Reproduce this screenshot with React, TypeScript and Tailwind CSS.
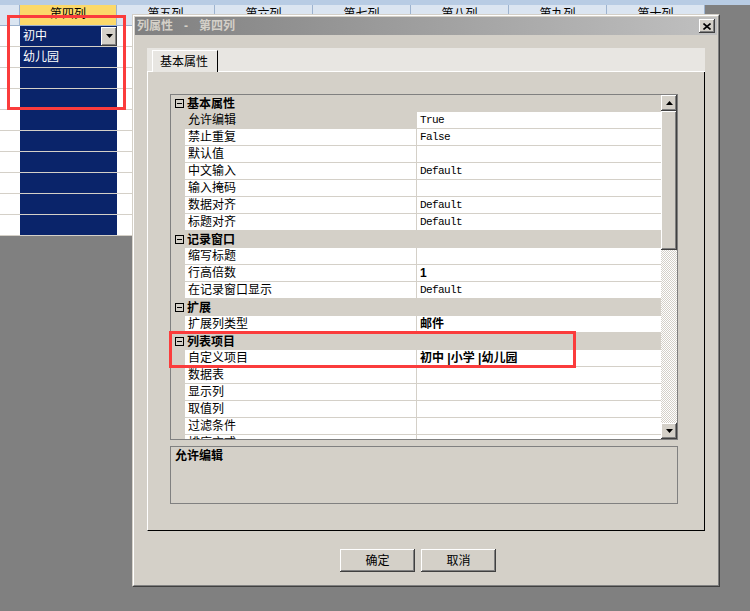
import React from 'react';

type Prop = { cat?: boolean; name: string; value?: string; bold?: boolean; sel?: boolean };

const props: Prop[] = [
  { cat: true, name: '基本属性' },
  { name: '允许编辑', value: 'True', sel: true },
  { name: '禁止重复', value: 'False' },
  { name: '默认值' },
  { name: '中文输入', value: 'Default' },
  { name: '输入掩码' },
  { name: '数据对齐', value: 'Default' },
  { name: '标题对齐', value: 'Default' },
  { cat: true, name: '记录窗口' },
  { name: '缩写标题' },
  { name: '行高倍数', value: '1', bold: true },
  { name: '在记录窗口显示', value: 'Default' },
  { cat: true, name: '扩展' },
  { name: '扩展列类型', value: '邮件', bold: true },
  { cat: true, name: '列表项目' },
  { name: '自定义项目', value: '初中 |小学 |幼儿园', bold: true },
  { name: '数据表' },
  { name: '显示列' },
  { name: '取值列' },
  { name: '过滤条件' },
  { name: '排序方式' },
];

const headers = ['第五列', '第六列', '第七列', '第八列', '第九列', '第十列'];

const raised =
  'shadow-[inset_-1px_-1px_#404040,inset_1px_1px_#ffffff,inset_-2px_-2px_#808080,inset_2px_2px_#d4d0c8]';

const DownArrow = () => (
  <svg width="7" height="4" viewBox="0 0 7 4">
    <path d="M0 0h7L3.5 4z" fill="#000" />
  </svg>
);

const UpArrow = () => (
  <svg width="7" height="4" viewBox="0 0 7 4">
    <path d="M0 4h7L3.5 0z" fill="#000" />
  </svg>
);

const Spreadsheet = () => (
  <div className="w-[706px]">
    <div className="flex h-[21px]">
      <div className="w-[20px] border-b border-r border-[#9db3cf] bg-[#dbe5f1]" />
      <div className="w-[97px] border-b border-r border-[#9db3cf] bg-[#fcd96a] text-center leading-[18px]">
        第四列
      </div>
      {headers.map((h) => (
        <div
          key={h}
          className="w-[98px] border-b border-r border-[#9db3cf] bg-[#dbe5f1] text-center leading-[18px]"
        >
          {h}
        </div>
      ))}
    </div>
    {Array.from({ length: 10 }).map((_, i) => (
      <div key={i} className="flex h-[21px] bg-white">
        <div className="w-[20px] border-b border-[#d4d0c8]" />
        <div className="flex w-[97px] items-center border-b border-[#d4d0c8] bg-[#0a246a] text-white">
          <span className="flex-1 pl-[3px]">{i === 0 ? '初中' : i === 1 ? '幼儿园' : ''}</span>
          {i === 0 && (
            <span className={`flex h-[19px] w-[16px] items-center justify-center bg-[#d4d0c8] ${raised}`}>
              <DownArrow />
            </span>
          )}
        </div>
        <div className="flex-1 border-b border-[#d4d0c8]" />
      </div>
    ))}
  </div>
);

const PropRow = ({ p }: { p: Prop }) => {
  if (p.cat) {
    return (
      <div className="flex h-[17px] shrink-0 items-center bg-[#d4d0c8]">
        <span className="flex w-[16px] justify-center pl-[1px]">
          <span className="flex h-[9px] w-[9px] items-center justify-center border border-black">
            <span className="h-px w-[5px] bg-black" />
          </span>
        </span>
        <span className="font-bold">{p.name}</span>
      </div>
    );
  }
  return (
    <div className="flex h-[17px] shrink-0">
      <div className="w-[14px] bg-[#d4d0c8]" />
      <div
        className={`w-[231px] border-b border-[#d4d0c8] pl-[3px] ${p.sel ? 'bg-[#d4d0c8]' : 'bg-white'}`}
      >
        {p.name}
      </div>
      <div className="w-px bg-[#d4d0c8]" />
      <div
        className={`flex-1 whitespace-pre border-b border-[#d4d0c8] bg-white pl-[3px] ${
          p.bold ? 'font-bold' : "font-['Liberation_Mono',monospace] text-[11px] tracking-[-0.6px]"
        }`}
      >
        {p.value}
      </div>
    </div>
  );
};

const PropertyGrid = () => (
  <div className="flex h-[346px] w-[508px] border border-[#808080]">
    <div className="flex w-[490px] flex-col overflow-hidden">
      {props.map((p) => (
        <PropRow key={p.name} p={p} />
      ))}
    </div>
    <div className="flex w-[16px] flex-col">
      <div className={`flex h-[16px] items-center justify-center bg-[#d4d0c8] ${raised}`}>
        <UpArrow />
      </div>
      <div className={`h-[139px] bg-[#d4d0c8] ${raised}`} />
      <div className="flex-1 bg-[image:repeating-conic-gradient(#d4d0c8_0_25%,#ffffff_0_50%)] bg-[length:2px_2px]" />
      <div className={`flex h-[16px] items-center justify-center bg-[#d4d0c8] ${raised}`}>
        <DownArrow />
      </div>
    </div>
  </div>
);

const Dialog = () => (
  <div className="absolute left-[132px] top-[14px] h-[573px] w-[588px] border border-[#d4d0c8] border-b-[#404040] border-r-[#404040] bg-[#d4d0c8]">
    <div className="h-full border border-white border-b-[#808080] border-r-[#808080] p-px">
      <div className="flex h-[18px] items-center bg-linear-to-r from-[#808080] to-[#c0c0c0] pl-[2px] pr-[2px] font-bold text-[#d4d0c8]">
        <span>列属性</span>
        <span className="mx-[11px]">-</span>
        <span className="flex-1">第四列</span>
        <span className={`flex h-[14px] w-[16px] items-center justify-center bg-[#d4d0c8] ${raised}`}>
          <svg width="8" height="7" viewBox="0 0 8 7">
            <path d="M0.5 0.5l7 6M7.5 0.5l-7 6" stroke="#000" strokeWidth="1.6" />
          </svg>
        </span>
      </div>

      <div className="ml-[12px] mt-[13px] w-[558px]">
        <div className="flex h-[24px] bg-[#e8e6e2]">
          <div className="w-[5px] border-b border-white" />
          <div className="mt-[2px] flex h-[22px] w-[66px] items-center border-l border-r border-t border-white border-r-black pl-[7px]">
            基本属性
          </div>
          <div className="flex-1 border-b border-white" />
        </div>
        <div className="h-[459px] border-b border-l border-r border-black border-l-white pl-[22px] pt-[22px]">
          <PropertyGrid />
          <div className="mt-[6px] h-[58px] w-[508px] border border-[#808080] pl-[4px] pt-[1px] font-bold">
            允许编辑
          </div>
        </div>
      </div>

      <div className="ml-[205px] mt-[18px] flex gap-[6px]">
        <button className={`h-[23px] w-[75px] bg-[#d4d0c8] text-center ${raised}`}>确定</button>
        <button className={`h-[23px] w-[75px] bg-[#d4d0c8] text-center ${raised}`}>取消</button>
      </div>
    </div>
  </div>
);

export default function App() {
  return (
    <div className="relative h-[611px] w-[750px] overflow-hidden bg-[#808080] font-['Liberation_Sans','Noto_Sans_CJK_SC',sans-serif] text-[12px] leading-[16px] text-black">
      <div className="h-[5px] bg-[#b8cce4]" />
      <Spreadsheet />
      <Dialog />
      <div className="pointer-events-none absolute left-[7px] top-[15px] h-[95px] w-[119px] border-[3px] border-[#fb3c3c]" />
      <div className="pointer-events-none absolute left-[169px] top-[331px] h-[37px] w-[407px] border-[3px] border-[#fb3c3c]" />
    </div>
  );
}
